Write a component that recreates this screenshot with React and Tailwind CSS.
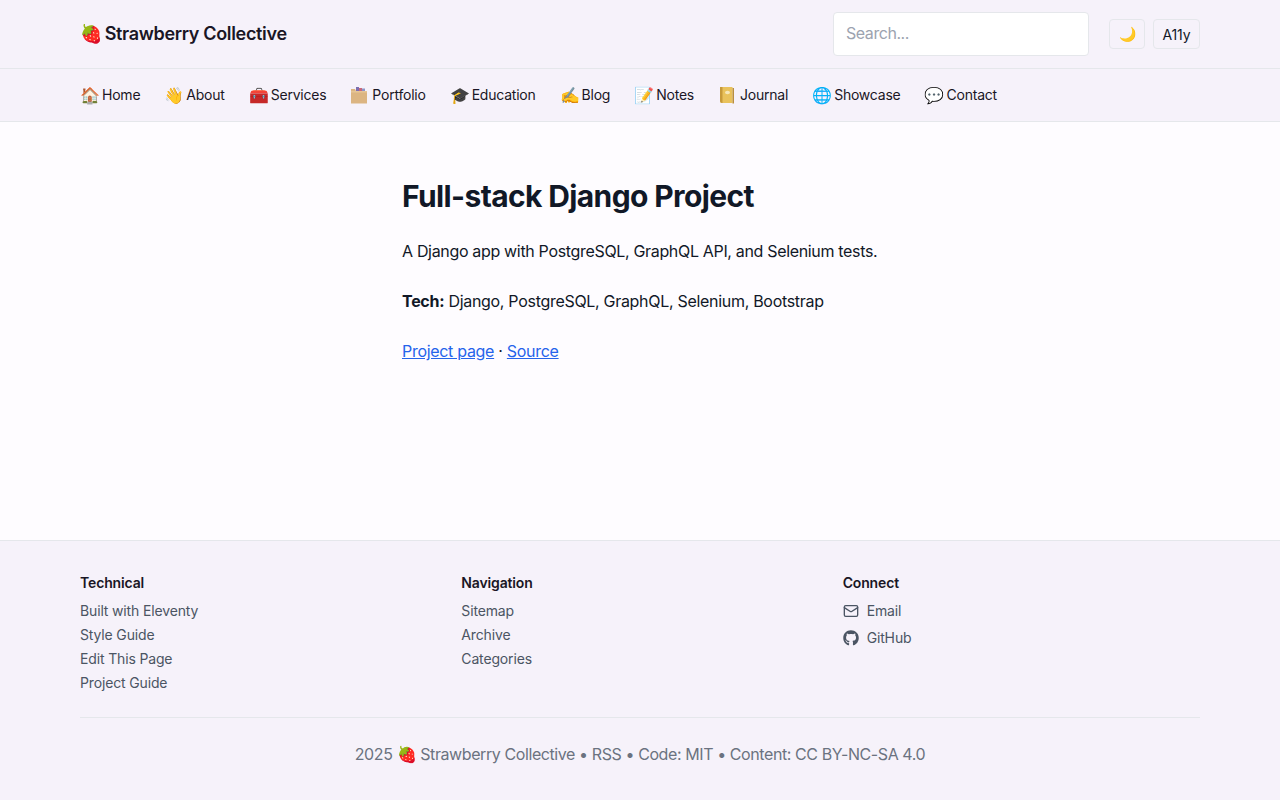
import { Mail } from 'lucide-react';
import { FaGithub } from 'react-icons/fa';

// closer to the reference's glyphs than the installed emoji font
const BoxIcon = () => (
  <svg width="18" height="18" viewBox="0 0 18 18" className="block">
    <rect x="6" y="1" width="3" height="5" fill="#7d6fb0" />
    <rect x="9" y="2" width="3" height="4" fill="#c9677a" />
    <rect x="12" y="2.5" width="3" height="3.5" fill="#8a94c8" />
    <path d="M1 3h4l1 2h11v12.5H1z" fill="#dcb582" />
    <path d="M1 5h16v1.5H1z" fill="#e6c596" />
  </svg>
);

const JournalIcon = () => (
  <svg width="18" height="18" viewBox="0 0 18 18" className="block">
    <path d="M2 1h12.5v16H4a2 2 0 0 1-2-2z" fill="#e9c25c" />
    <path d="M2 1h2.5v16H4a2 2 0 0 1-2-2z" fill="#c79a3a" />
    <path d="M14.5 2h1.5v15.5h-1.5z" fill="#b98f3f" />
    <ellipse cx="9.5" cy="6.5" rx="2.5" ry="1.8" fill="#f6e7b8" />
  </svg>
);

const NAV = [
  ['🏠', 'Home'],
  ['👋', 'About'],
  ['🧰', 'Services'],
  [<BoxIcon />, 'Portfolio'],
  ['🎓', 'Education'],
  ['✍️', 'Blog'],
  ['📝', 'Notes'],
  [<JournalIcon />, 'Journal'],
  ['🌐', 'Showcase'],
  ['💬', 'Contact'],
];

const FOOTER_COLS = [
  { title: 'Technical', links: ['Built with Eleventy', 'Style Guide', 'Edit This Page', 'Project Guide'] },
  { title: 'Navigation', links: ['Sitemap', 'Archive', 'Categories'] },
];

export default function App() {
  return (
    <div className="min-h-[800px] flex flex-col bg-[#fefcff] font-['Inter',sans-serif] text-[#111827]">
      <header className="h-[69px] bg-[#f6f2fa] border-b border-[#e5e7eb]">
        <div className="mx-auto w-[1120px] h-full flex items-center justify-between">
          <a className="text-[18px] leading-[28px] -mt-[1px] font-semibold tracking-[-0.33px] text-[#1a1625] flex items-center gap-[3px]">
            <span>🍓</span>
            <span>Strawberry Collective</span>
          </a>
          <div className="flex items-center gap-5">
            <input
              placeholder="Search..."
              className="w-[256px] h-[44px] px-3 pb-[2px] bg-white border border-[#e5e7eb] rounded text-base tracking-[-0.45px] placeholder:text-[#9ca3af] outline-none"
            />
            <div className="flex items-center gap-2">
              <button className="w-[36px] h-[30px] flex items-center justify-center rounded border border-[#e5e7eb] bg-[#f6f2fa] text-sm">🌙</button>
              <button className="w-[47px] h-[30px] pt-[2px] flex items-center justify-center rounded border border-[#e5e7eb] bg-[#f6f2fa] text-sm tracking-[-0.1px]">A11y</button>
            </div>
          </div>
        </div>
      </header>

      <nav className="h-[53px] bg-[#f6f2fa] border-b border-[#e5e7eb]">
        <div className="mx-auto w-[1120px] h-full flex items-center gap-6 text-sm tracking-[-0.225px] text-[#1a1625]">
          {NAV.map(([icon, label]) => (
            <a key={label} className="flex items-center">
              <span className="w-[22px] text-[16px] tracking-normal">{icon}</span>
              <span>{label}</span>
            </a>
          ))}
        </div>
      </nav>

      <main className="h-[418px]">
        <div className="mx-auto w-[476px] pt-[55px]">
          <h1 className="text-[30px] leading-[38px] font-bold tracking-[-0.62px] text-[#111827]">Full-stack Django Project</h1>
          <div className="text-base leading-[26px] tracking-[-0.3px]">
            <p className="mt-[23px] whitespace-nowrap tracking-[-0.33px]">A Django app with PostgreSQL, GraphQL API, and Selenium tests.</p>
            <p className="mt-[24px]"><strong>Tech:</strong> Django, PostgreSQL, GraphQL, Selenium, Bootstrap</p>
            <p className="mt-[24px]">
              <a className="text-[#2563eb] underline">Project page</a> · <a className="text-[#2563eb] underline">Source</a>
            </p>
          </div>
        </div>
      </main>

      <footer className="flex-1 bg-[#f6f2fa] border-t border-[#e5e7eb]">
        <div className="mx-auto w-[1120px] pt-[32px]">
          <div className="grid grid-cols-3 gap-6 pb-[22px] border-b border-[#e5e7eb] text-sm tracking-[-0.15px]">
            {FOOTER_COLS.map((col) => (
              <div key={col.title}>
                <h3 className="font-semibold leading-5 text-[#1a1625]">{col.title}</h3>
                <ul className="mt-[6px] text-[#4b5563]">
                  {col.links.map((l) => (
                    <li key={l} className="h-[24px] leading-[24px]">{l}</li>
                  ))}
                </ul>
              </div>
            ))}
            <div>
              <h3 className="font-semibold leading-5 text-[#1a1625]">Connect</h3>
              <ul className="mt-[6px] flex flex-col gap-[3px] text-[#4b5563]">
                <li className="h-[24px] flex items-center gap-2"><Mail className="w-4 h-4" /> Email</li>
                <li className="h-[24px] flex items-center gap-2"><FaGithub className="w-4 h-4" /> GitHub</li>
              </ul>
            </div>
          </div>
          <p className="pt-[24px] text-center text-base leading-6 tracking-[-0.41px] text-[#6b7280]">2025 🍓 Strawberry Collective • RSS • Code: MIT • Content: CC BY-NC-SA 4.0</p>
        </div>
      </footer>
    </div>
  );
}
